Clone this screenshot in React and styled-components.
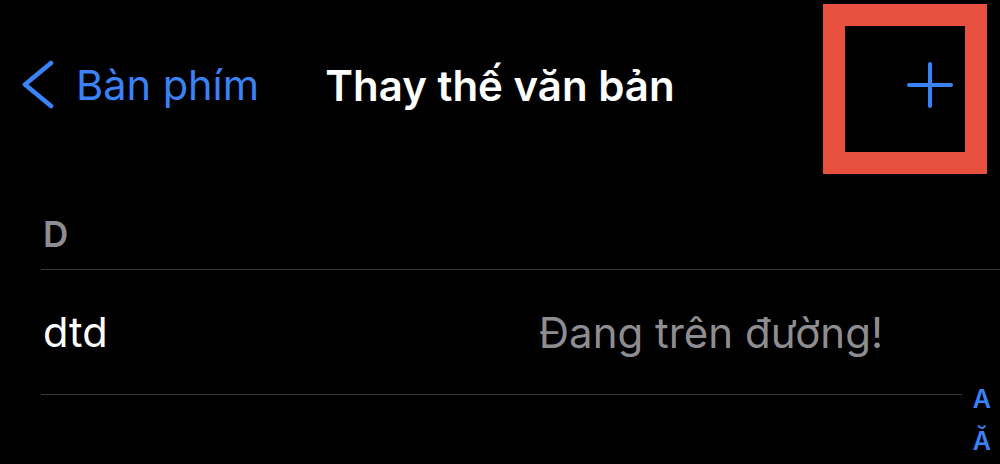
import React from "react";
import styled, { createGlobalStyle } from "styled-components";

const Global = createGlobalStyle`
  html, body { margin: 0; padding: 0; background: #000; }
  body { width: 1000px; height: 464px; overflow: hidden; font-family: Inter, "Noto Sans", "Liberation Sans", sans-serif; -webkit-font-smoothing: antialiased; }
`;

const Screen = styled.div`
  position: relative;
  width: 1000px;
  height: 464px;
  background: #000;
  color: #fff;
  overflow: hidden;
`;

const NavBar = styled.header`
  display: grid;
  grid-template-columns: 1fr auto 1fr;
  align-items: center;
  height: 170px;
`;

const BackButton = styled.button`
  justify-self: start;
  display: flex;
  align-items: center;
  gap: 22px;
  margin: 0 0 0 22px;
  padding: 0;
  border: 0;
  background: none;
  color: #3a82f6;
  font-family: inherit;
  font-size: 41.5px;
  font-weight: 400;
  cursor: pointer;
`;

const Title = styled.h1`
  margin: 0;
  font-size: 42px;
  font-weight: 600;
  color: #fff;
`;

const AddButton = styled.button`
  position: relative;
  justify-self: end;
  display: flex;
  margin: 0 47px 0 0;
  padding: 0;
  border: 0;
  background: none;
  cursor: pointer;
`;

const Highlight = styled.span`
  position: absolute;
  left: -84px;
  top: -58px;
  width: 164px;
  height: 170px;
  box-sizing: border-box;
  border: 22px solid #e7503f;
  pointer-events: none;
`;

const SectionHeader = styled.div`
  margin-left: 41px;
  padding: 0 0 14px 2px;
  height: 100px;
  box-sizing: border-box;
  display: flex;
  align-items: flex-end;
  border-bottom: 1.5px solid #38383a;
  color: #8d8d92;
  font-size: 35px;
  font-weight: 600;
`;

const Row = styled.div`
  display: flex;
  align-items: center;
  justify-content: space-between;
  height: 124px;
  margin: 0 38px 0 41px;
  padding: 0 79px 0 2px;
  border-bottom: 1.5px solid #38383a;
`;

const Phrase = styled.span`
  font-size: 41.5px;
  color: #fff;
`;

const Replacement = styled.span`
  font-size: 42px;
  color: #8d8d92;
`;

const IndexBar = styled.nav`
  position: absolute;
  right: 9px;
  top: 378px;
  display: flex;
  flex-direction: column;
  align-items: center;
  color: #3a82f6;
  font-size: 25px;
  font-weight: 600;
  line-height: 42px;
`;

const Chevron = () => (
  <svg width="32" height="50" viewBox="0 0 32 50" fill="none">
    <path d="M29 3 L3 24.5 L29 46" stroke="#3a82f6" strokeWidth="4.6" strokeLinecap="round" strokeLinejoin="round" />
  </svg>
);

const Plus = () => (
  <svg width="46" height="46" viewBox="0 0 46 46" fill="none">
    <path d="M23 2 V44 M2 23 H44" stroke="#3a82f6" strokeWidth="4" strokeLinecap="round" />
  </svg>
);

export default function App() {
  return (
    <Screen>
      <Global />
      <NavBar>
        <BackButton>
          <Chevron />
          <span>Bàn phím</span>
        </BackButton>
        <Title>Thay thế văn bản</Title>
        <AddButton aria-label="Thêm">
          <Plus />
          <Highlight />
        </AddButton>
      </NavBar>
      <SectionHeader>D</SectionHeader>
      <Row>
        <Phrase>dtd</Phrase>
        <Replacement>Đang trên đường!</Replacement>
      </Row>
      <IndexBar>
        <span>A</span>
        <span>Ă</span>
      </IndexBar>
    </Screen>
  );
}
